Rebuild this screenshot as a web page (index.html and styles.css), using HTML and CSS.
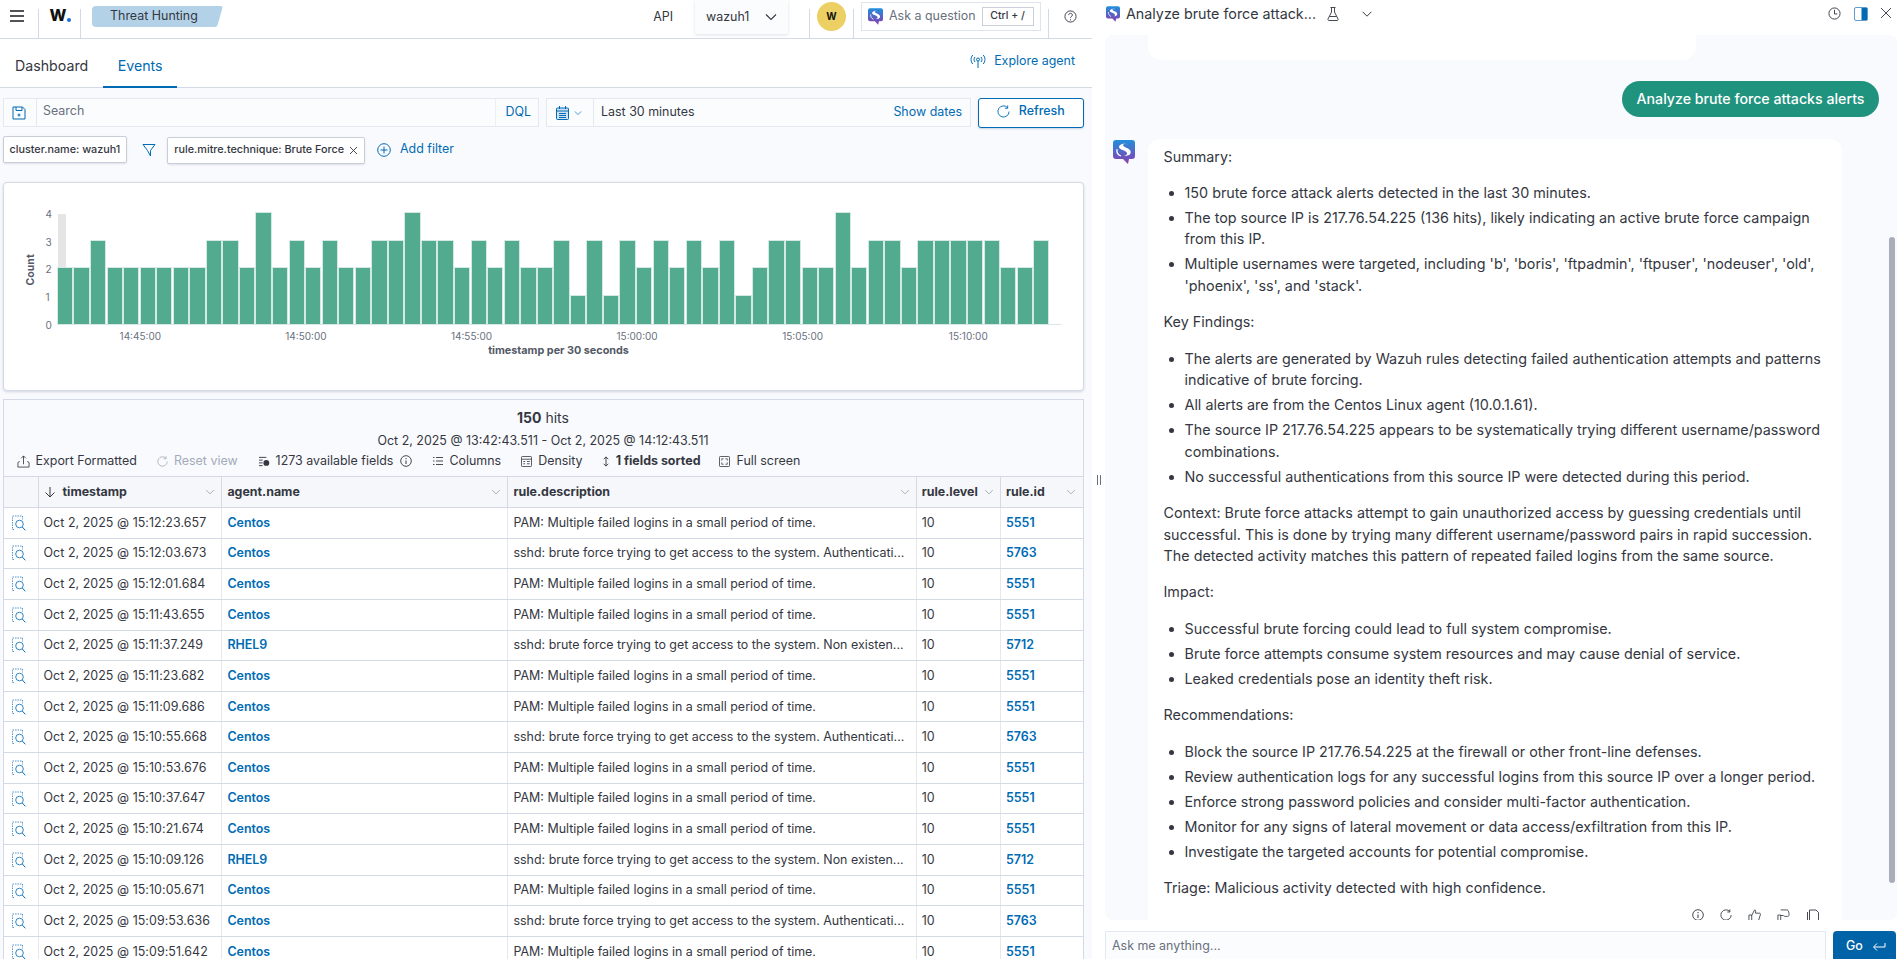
FILE: index.html
```html
<!DOCTYPE html>
<html lang="en">
<head>
<meta charset="utf-8">
<title>Threat Hunting</title>
<link rel="stylesheet" href="styles.css">
</head>
<body>
<svg class="defs" width="0" height="0" aria-hidden="true">
  <defs>
    <linearGradient id="ai" x1="0" y1="0" x2="0" y2="1">
      <stop offset="0" stop-color="#1f8fdc"/><stop offset="1" stop-color="#8a3bb0"/>
    </linearGradient>
    <symbol id="ai-logo" viewBox="0 0 22 24">
      <path d="M3 0h16a3 3 0 0 1 3 3v13a3 3 0 0 1-3 3h-3l-1 5-5-5H3a3 3 0 0 1-3-3V3a3 3 0 0 1 3-3z" fill="url(#ai)"/>
      <path d="M15 4.500C11 2.500 6 4.500 6 7c0 3 7 3 8 6 .4 1.500-1 2.500-3 2.500 5 1 7.500-1.500 6.500-4.500-1-3-8-4-7.500-6 .3-1 3-1.200 5-.5z" fill="#fff"/>
      <path d="M4 9c-.5 3 1 6 4 7" fill="none" stroke="#fff" stroke-width="1.200"/>
    </symbol>
    <symbol id="chev" viewBox="0 0 16 16"><path d="M3 5.500l5 5 5-5" fill="none" stroke="currentColor" stroke-width="1.100"/></symbol>
    <symbol id="inspect" viewBox="0 0 16 16">
      <path d="M3 14.500H1.500v-12h1M1.500 1h10v3.500" fill="none" stroke="#3d8cc6" stroke-dasharray="1.500 1" stroke-width=".9"/>
      <circle cx="8.500" cy="9" r="3.800" fill="none" stroke="#1a78b9" stroke-width=".9"/>
      <path d="M11.300 12l3 3.300" stroke="#006bb4" stroke-width="1"/>
    </symbol>
  </defs>
</svg>

<div class="app">
  <main class="left">
    <header class="topbar">
      <button class="tb-burger" aria-label="Menu">
        <svg width="16" height="14" viewBox="0 0 16 14"><path d="M1 2h14M1 7h14M1 12h14" stroke="#1a1c21" stroke-width="1.500"/></svg>
      </button>
      <div class="tb-logo"><span class="logo-w">W</span><span class="logo-dot"></span></div>
      <div class="crumb"><span class="crumb-body">Threat Hunting</span></div>
      <div class="tb-spacer"></div>
      <span class="tb-api">API</span>
      <div class="tb-select"><span>wazuh1</span><svg class="ic16" width="16" height="16"><use href="#chev"/></svg></div>
      <div class="tb-avatar-wrap"><span class="avatar">w</span></div>
      <div class="ask">
        <svg width="15" height="17"><use href="#ai-logo"/></svg>
        <span class="ask-text">Ask a question</span>
        <span class="kbd">Ctrl + /</span>
      </div>
      <div class="tb-help">
        <svg width="13" height="13" viewBox="0 0 14 14"><circle cx="7" cy="7" r="6" fill="none" stroke="#343741"/><path d="M5 5.500c0-2.500 4-2.500 4 0 0 1.500-2 1.500-2 3M7 10v1.200" fill="none" stroke="#343741"/></svg>
      </div>
    </header>

    <nav class="tabs">
      <a class="tab">Dashboard</a>
      <a class="tab tab-on">Events</a>
      <div class="tb-spacer"></div>
      <a class="explore">
        <svg width="16" height="14" viewBox="0 0 16 14"><g fill="none" stroke="#006bb4"><circle cx="8" cy="5.500" r="1.500"/><path d="M8 7v7M5 3c-1.300 1.500-1.300 3.500 0 5M11 3c1.300 1.500 1.300 3.500 0 5M2.800 1C.5 3.500.5 7.500 2.800 10M13.200 1c2.300 2.500 2.300 6.500 0 9"/></g></svg>
        Explore agent
      </a>
    </nav>

    <div class="content">
      <div class="query">
        <div class="searchbar">
          <span class="save">
            <svg width="14" height="14" viewBox="0 0 14 14"><path d="M1 1h9.500L13 3.500V13H1zM4 1v3.500h6V1M7 7.500v3M5.500 9h3" fill="none" stroke="#006bb4"/></svg>
          </span>
          <span class="search-ph">Search</span>
          <span class="dql">DQL</span>
        </div>
        <div class="datebar">
          <span class="cal">
            <svg width="13" height="14" viewBox="0 0 13 14"><rect x=".5" y="2" width="12" height="11.500" rx="1" fill="#cfe2f1" stroke="#006bb4"/><path d="M3.500 0v3M9.500 0v3M.5 5h12M3 7.500h7M3 9.500h7M3 11.500h7" stroke="#006bb4"/></svg>
            <svg class="cal-chev" width="10" height="10"><use href="#chev"/></svg>
          </span>
          <span class="date-val">Last 30 minutes</span>
          <span class="show-dates">Show dates</span>
        </div>
        <button class="refresh">
          <svg width="13" height="13" viewBox="0 0 14 14"><path d="M11.500 3A6 6 0 1 0 13 7M11.500 .5V3.500H8.500" fill="none" stroke="#006bb4"/></svg>
          Refresh
        </button>
      </div>

      <div class="filters">
        <span class="fpill">cluster.name: wazuh1</span>
        <span class="ficon">
          <svg width="14" height="14" viewBox="0 0 14 14"><path d="M1 1.500h12L8.500 7.500V13L5.500 7.500z" fill="none" stroke="#006bb4"/></svg>
        </span>
        <span class="fpill fpill2">rule.mitre.technique: Brute Force
          <svg width="9" height="9" viewBox="0 0 9 9"><path d="M1 1l7 7M8 1L1 8" stroke="#343741" stroke-width=".9"/></svg>
        </span>
        <span class="addf">
          <svg width="14" height="14" viewBox="0 0 14 14"><circle cx="7" cy="7" r="6.300" fill="none" stroke="#006bb4"/><path d="M3.500 7h7M7 3.500v7" stroke="#006bb4"/></svg>
          Add filter
        </span>
      </div>

      <section class="chart">
        <div class="brush"></div>
        <div class="axis-title-y">Count</div>
        <span class="yt y4">4</span><span class="yt y3">3</span><span class="yt y2">2</span><span class="yt y1">1</span><span class="yt y0">0</span>
        <div class="bars">
          <i class="b2"></i><i class="b2"></i><i class="b3"></i><i class="b2"></i><i class="b2"></i><i class="b2"></i><i class="b2"></i><i class="b2"></i><i class="b2"></i><i class="b3"></i>
          <i class="b3"></i><i class="b2"></i><i class="b4"></i><i class="b2"></i><i class="b3"></i><i class="b2"></i><i class="b3"></i><i class="b2"></i><i class="b2"></i><i class="b3"></i>
          <i class="b3"></i><i class="b4"></i><i class="b3"></i><i class="b3"></i><i class="b2"></i><i class="b3"></i><i class="b2"></i><i class="b3"></i><i class="b2"></i><i class="b2"></i>
          <i class="b3"></i><i class="b1"></i><i class="b3"></i><i class="b1"></i><i class="b3"></i><i class="b2"></i><i class="b3"></i><i class="b2"></i><i class="b3"></i><i class="b2"></i>
          <i class="b3"></i><i class="b1"></i><i class="b2"></i><i class="b3"></i><i class="b3"></i><i class="b2"></i><i class="b2"></i><i class="b4"></i><i class="b2"></i><i class="b3"></i>
          <i class="b3"></i><i class="b2"></i><i class="b3"></i><i class="b3"></i><i class="b3"></i><i class="b3"></i><i class="b3"></i><i class="b2"></i><i class="b2"></i><i class="b3"></i>
        </div>
        <div class="xticks">
          <span>14:45:00</span><span>14:50:00</span><span>14:55:00</span><span>15:00:00</span><span>15:05:00</span><span>15:10:00</span>
        </div>
        <div class="axis-title-x">timestamp per 30 seconds</div>
      </section>

      <section class="results">
        <div class="res-head">
          <div class="hits"><b>150</b> hits</div>
          <div class="range">Oct 2, 2025 @ 13:42:43.511 - Oct 2, 2025 @ 14:12:43.511</div>
          <div class="toolbar">
            <span class="tool t-export"><svg width="13" height="13" viewBox="0 0 14 14"><path d="M1 8v5h12V8M1 8l2-1M13 8l-2-1M7 10V1M4.500 3.500L7 1l2.500 2.500" fill="none" stroke="#343741" stroke-width=".9"/></svg>Export Formatted</span>
            <span class="tool t-reset"><svg width="11" height="11" viewBox="0 0 14 14"><path d="M11.500 3A6 6 0 1 0 13 7M11.500 .5V3.500H8.500" fill="none" stroke="#a2abba"/></svg>Reset view</span>
            <span class="tool t-fields"><svg width="11" height="11" viewBox="0 0 12 12"><path d="M0 1.500h8M0 4.500h4M0 7.500h4M0 10.500h4" stroke="#343741"/><circle cx="8" cy="7.500" r="3.200" fill="#343741"/></svg>1273 available fields<svg class="info" width="12" height="12" viewBox="0 0 12 12"><circle cx="6" cy="6" r="5.300" fill="none" stroke="#343741" stroke-width=".9"/><path d="M6 5.500v3.500M6 3v1.200" stroke="#343741"/></svg></span>
            <span class="tool t-cols"><svg width="10" height="10" viewBox="0 0 10 10"><path d="M0 1.500h1.500M0 5h1.500M0 8.500h1.500M3 1.500h7M3 5h7M3 8.500h7" stroke="#343741" stroke-width=".9"/></svg>Columns</span>
            <span class="tool t-dens"><svg width="11" height="11" viewBox="0 0 12 12"><rect x=".5" y=".5" width="11" height="11" rx="1" fill="none" stroke="#343741" stroke-width=".9"/><path d="M.5 3.500h11M2.500 6h2M6.500 6h3M2.500 8.500h2M6.500 8.500h3" stroke="#343741" stroke-width=".9"/></svg>Density</span>
            <span class="tool t-sort"><svg width="8" height="11" viewBox="0 0 8 12"><path d="M4 1v10M1.500 3.500L4 1l2.500 2.500M1.500 8.500L4 11l2.500-2.500" fill="none" stroke="#343741"/></svg><b>1 fields sorted</b></span>
            <span class="tool t-full"><svg width="11" height="11" viewBox="0 0 12 12"><rect x=".5" y=".5" width="11" height="11" rx="1" fill="none" stroke="#343741" stroke-width=".9"/><path d="M3 5V3h2M7 3h2v2M9 7v2H7M5 9H3V7" fill="none" stroke="#343741" stroke-width=".8"/></svg>Full screen</span>
          </div>
        </div>

        <div class="grid">
          <div class="row row-h">
            <div class="cell"></div>
            <div class="cell"><svg class="sort-arrow" width="12" height="12" viewBox="0 0 12 12"><path d="M6 1v10M1.500 6.500L6 11l4.500-4.500" fill="none" stroke="#343741"/></svg><span class="h-t">timestamp</span><svg class="h-c" width="12" height="12"><use href="#chev"/></svg></div>
            <div class="cell"><span class="h-t">agent.name</span><svg class="h-c" width="12" height="12"><use href="#chev"/></svg></div>
            <div class="cell"><span class="h-t">rule.description</span><svg class="h-c" width="12" height="12"><use href="#chev"/></svg></div>
            <div class="cell"><span class="h-t">rule.level</span><svg class="h-c" width="12" height="12"><use href="#chev"/></svg></div>
            <div class="cell"><span class="h-t">rule.id</span><svg class="h-c" width="12" height="12"><use href="#chev"/></svg></div>
          </div>

          <div class="row"><div class="cell ci"><svg width="16" height="16"><use href="#inspect"/></svg></div><div class="cell ts">Oct 2, 2025 @ 15:12:23.657</div><div class="cell lnk">Centos</div><div class="cell">PAM: Multiple failed logins in a small period of time.</div><div class="cell">10</div><div class="cell lnk">5551</div></div>
          <div class="row"><div class="cell ci"><svg width="16" height="16"><use href="#inspect"/></svg></div><div class="cell ts">Oct 2, 2025 @ 15:12:03.673</div><div class="cell lnk">Centos</div><div class="cell">sshd: brute force trying to get access to the system. Authenticati...</div><div class="cell">10</div><div class="cell lnk">5763</div></div>
          <div class="row"><div class="cell ci"><svg width="16" height="16"><use href="#inspect"/></svg></div><div class="cell ts">Oct 2, 2025 @ 15:12:01.684</div><div class="cell lnk">Centos</div><div class="cell">PAM: Multiple failed logins in a small period of time.</div><div class="cell">10</div><div class="cell lnk">5551</div></div>
          <div class="row"><div class="cell ci"><svg width="16" height="16"><use href="#inspect"/></svg></div><div class="cell ts">Oct 2, 2025 @ 15:11:43.655</div><div class="cell lnk">Centos</div><div class="cell">PAM: Multiple failed logins in a small period of time.</div><div class="cell">10</div><div class="cell lnk">5551</div></div>
          <div class="row"><div class="cell ci"><svg width="16" height="16"><use href="#inspect"/></svg></div><div class="cell ts">Oct 2, 2025 @ 15:11:37.249</div><div class="cell lnk">RHEL9</div><div class="cell">sshd: brute force trying to get access to the system. Non existen...</div><div class="cell">10</div><div class="cell lnk">5712</div></div>
          <div class="row"><div class="cell ci"><svg width="16" height="16"><use href="#inspect"/></svg></div><div class="cell ts">Oct 2, 2025 @ 15:11:23.682</div><div class="cell lnk">Centos</div><div class="cell">PAM: Multiple failed logins in a small period of time.</div><div class="cell">10</div><div class="cell lnk">5551</div></div>
          <div class="row"><div class="cell ci"><svg width="16" height="16"><use href="#inspect"/></svg></div><div class="cell ts">Oct 2, 2025 @ 15:11:09.686</div><div class="cell lnk">Centos</div><div class="cell">PAM: Multiple failed logins in a small period of time.</div><div class="cell">10</div><div class="cell lnk">5551</div></div>
          <div class="row"><div class="cell ci"><svg width="16" height="16"><use href="#inspect"/></svg></div><div class="cell ts">Oct 2, 2025 @ 15:10:55.668</div><div class="cell lnk">Centos</div><div class="cell">sshd: brute force trying to get access to the system. Authenticati...</div><div class="cell">10</div><div class="cell lnk">5763</div></div>
          <div class="row"><div class="cell ci"><svg width="16" height="16"><use href="#inspect"/></svg></div><div class="cell ts">Oct 2, 2025 @ 15:10:53.676</div><div class="cell lnk">Centos</div><div class="cell">PAM: Multiple failed logins in a small period of time.</div><div class="cell">10</div><div class="cell lnk">5551</div></div>
          <div class="row"><div class="cell ci"><svg width="16" height="16"><use href="#inspect"/></svg></div><div class="cell ts">Oct 2, 2025 @ 15:10:37.647</div><div class="cell lnk">Centos</div><div class="cell">PAM: Multiple failed logins in a small period of time.</div><div class="cell">10</div><div class="cell lnk">5551</div></div>
          <div class="row"><div class="cell ci"><svg width="16" height="16"><use href="#inspect"/></svg></div><div class="cell ts">Oct 2, 2025 @ 15:10:21.674</div><div class="cell lnk">Centos</div><div class="cell">PAM: Multiple failed logins in a small period of time.</div><div class="cell">10</div><div class="cell lnk">5551</div></div>
          <div class="row"><div class="cell ci"><svg width="16" height="16"><use href="#inspect"/></svg></div><div class="cell ts">Oct 2, 2025 @ 15:10:09.126</div><div class="cell lnk">RHEL9</div><div class="cell">sshd: brute force trying to get access to the system. Non existen...</div><div class="cell">10</div><div class="cell lnk">5712</div></div>
          <div class="row"><div class="cell ci"><svg width="16" height="16"><use href="#inspect"/></svg></div><div class="cell ts">Oct 2, 2025 @ 15:10:05.671</div><div class="cell lnk">Centos</div><div class="cell">PAM: Multiple failed logins in a small period of time.</div><div class="cell">10</div><div class="cell lnk">5551</div></div>
          <div class="row"><div class="cell ci"><svg width="16" height="16"><use href="#inspect"/></svg></div><div class="cell ts">Oct 2, 2025 @ 15:09:53.636</div><div class="cell lnk">Centos</div><div class="cell">sshd: brute force trying to get access to the system. Authenticati...</div><div class="cell">10</div><div class="cell lnk">5763</div></div>
          <div class="row"><div class="cell ci"><svg width="16" height="16"><use href="#inspect"/></svg></div><div class="cell ts">Oct 2, 2025 @ 15:09:51.642</div><div class="cell lnk">Centos</div><div class="cell">PAM: Multiple failed logins in a small period of time.</div><div class="cell">10</div><div class="cell lnk">5551</div></div>
        </div>
      </section>
    </div>
  </main>

  <div class="handle"><span class="grip"></span></div>

  <aside class="chat">
    <header class="chat-top">
      <svg class="chat-top-logo" width="14" height="16"><use href="#ai-logo"/></svg>
      <span class="chat-title">Analyze brute force attack...</span>
      <svg class="flask" width="12" height="14" viewBox="0 0 12 14"><path d="M3.500 .5h5M4.500 .5V5L1 12c-.3.700 0 1.500 1 1.500h8c1 0 1.300-.8 1-1.500L7.500 5V.5M2.500 9.500h7" fill="none" stroke="#343741" stroke-width=".9"/></svg>
      <svg class="chat-chev" width="14" height="14"><use href="#chev"/></svg>
      <div class="tb-spacer"></div>
      <svg class="cti" width="13" height="13" viewBox="0 0 14 14"><circle cx="7" cy="7" r="6" fill="none" stroke="#343741"/><path d="M7 3v4.500h3" fill="none" stroke="#343741"/></svg>
      <svg class="cti" width="14" height="14" viewBox="0 0 14 14"><rect x=".5" y=".5" width="13" height="13" rx="1.500" fill="#fff" stroke="#5d9ccd"/><rect x="7.500" y="1" width="5.500" height="12" fill="#006bb4"/></svg>
      <svg class="cti" width="12" height="12" viewBox="0 0 12 12"><path d="M1 1l10 10M11 1L1 11" stroke="#343741" stroke-width=".9"/></svg>
    </header>

    <div class="chat-body">
      <div class="prev-card"></div>
      <div class="bubble-row"><div class="bubble">Analyze brute force attacks alerts</div></div>
      <div class="msg">
        <svg class="msg-logo" width="22" height="24"><use href="#ai-logo"/></svg>
        <div class="card">
          <p>Summary:</p>
          <ul>
            <li>150 brute force attack alerts detected in the last 30 minutes.</li>
            <li>The top source IP is 217.76.54.225 (136 hits), likely indicating an active brute force campaign from this IP.</li>
            <li>Multiple usernames were targeted, including 'b', 'boris', 'ftpadmin', 'ftpuser', 'nodeuser', 'old', 'phoenix', 'ss', and 'stack'.</li>
          </ul>
          <p>Key Findings:</p>
          <ul>
            <li>The alerts are generated by Wazuh rules detecting failed authentication attempts and patterns indicative of brute forcing.</li>
            <li>All alerts are from the Centos Linux agent (10.0.1.61).</li>
            <li>The source IP 217.76.54.225 appears to be systematically trying different username/password combinations.</li>
            <li>No successful authentications from this source IP were detected during this period.</li>
          </ul>
          <p>Context: Brute force attacks attempt to gain unauthorized access by guessing credentials until successful. This is done by trying many different username/password pairs in rapid succession. The detected activity matches this pattern of repeated failed logins from the same source.</p>
          <p>Impact:</p>
          <ul>
            <li>Successful brute forcing could lead to full system compromise.</li>
            <li>Brute force attempts consume system resources and may cause denial of service.</li>
            <li>Leaked credentials pose an identity theft risk.</li>
          </ul>
          <p>Recommendations:</p>
          <ul>
            <li>Block the source IP 217.76.54.225 at the firewall or other front-line defenses.</li>
            <li>Review authentication logs for any successful logins from this source IP over a longer period.</li>
            <li>Enforce strong password policies and consider multi-factor authentication.</li>
            <li>Monitor for any signs of lateral movement or data access/exfiltration from this IP.</li>
            <li>Investigate the targeted accounts for potential compromise.</li>
          </ul>
          <p>Triage: Malicious activity detected with high confidence.</p>
          <div class="actions">
            <svg width="12" height="12" viewBox="0 0 12 12"><circle cx="6" cy="6" r="5.300" fill="none" stroke="#343741" stroke-width=".9"/><path d="M6 5.500v3.500M6 3v1.200" stroke="#343741"/></svg>
            <svg width="12" height="12" viewBox="0 0 14 14"><path d="M11.500 3A6 6 0 1 0 13 7M11.500 .5V3.500H8.500" fill="none" stroke="#343741"/></svg>
            <svg width="13" height="13" viewBox="0 0 14 14"><path d="M1 6.500h3V13H1zM4 7l3-6c1.500 0 1.500 1.500 1 3.500h4.500c1 0 1 1 .7 2L11.500 12c-.3 1-1 1-2 1H4" fill="none" stroke="#343741" stroke-width=".9"/></svg>
            <svg width="13" height="13" viewBox="0 0 14 14"><path d="M1 6.500h3V13H1zM4 7h2.500c1 0 1 1 3 1h2c1 0 1.500-1 1.500-2s-.5-5-2-5H4" fill="none" stroke="#343741" stroke-width=".9"/></svg>
            <svg width="12" height="14" viewBox="0 0 12 14"><path d="M2.500 13V1h6.500l2.500 2.500V13M.5 3v11" fill="none" stroke="#343741" stroke-width=".9"/></svg>
          </div>
        </div>
      </div>
      <div class="scroll-thumb"></div>
    </div>

    <div class="composer">
      <div class="input">Ask me anything...</div>
      <button class="go">Go
        <svg width="14" height="10" viewBox="0 0 14 10"><path d="M13 1v4H2M5 1.500L1.500 5 5 8.500" fill="none" stroke="#fff"/></svg>
      </button>
    </div>
  </aside>
</div>
</body>
</html>
```

FILE: styles.css
```css
* { box-sizing: border-box; }
html, body { margin: 0; height: 100%; overflow: hidden; background: #fff; }
body { font: 12.450px/1.3 Inter, "Liberation Sans", sans-serif; color: #343741; }
.defs { position: absolute; }
button { font: inherit; }
svg { flex: none; display: block; }
.tb-spacer { flex: 1; }

.app { display: flex; height: 959px; overflow: hidden; }
.left { width: 1092px; flex: none; display: flex; flex-direction: column; overflow: hidden; }

/* top bar */
.topbar { height: 39px; flex: none; display: flex; align-items: flex-start; border-bottom: 1px solid #d3dae6; }
.tb-burger { width: 37.500px; height: 32px; border: 0; background: none; padding: 0 0 0 9px; display: flex; align-items: center; }
.tb-logo { width: 43.500px; height: 30px; margin-top: 9px; border-left: 1px solid #d3dae6; border-right: 1px solid #d3dae6; padding: 0 0 0 11px; display: flex; align-items: flex-start; }
.logo-w { font: 800 16px/15px Inter, sans-serif; color: #111; letter-spacing: -.5px; margin-top: -1px; }
.logo-dot { width: 4px; height: 4px; border-radius: 50%; background: #1b6fe0; margin: 9px 0 0 1px; }
.crumb { display: flex; margin: 6px 0 0 11px; height: 21px; }
.crumb-body { width: 123px; background: #b3d2e8; border-radius: 4px 0 0 4px; padding-left: 18px; line-height: 20px; color: #343741; }
.crumb::after { content: ""; width: 8px; margin-left: -3px; background: #b3d2e8; border-radius: 0 2px 2px 0; transform: skewX(-16deg); }
.tb-api { margin: 8px 22px 0 0; line-height: 18px; }
.tb-select { width: 93px; height: 34px; display: flex; align-items: center; padding: 0 9px 0 11px; justify-content: space-between; box-shadow: 0 1px 3px rgba(60,80,120,.18); background: #fbfcfe; }
.tb-select .ic16 { color: #343741; }
.tb-avatar-wrap { margin: 9px 0 0 21px; width: 45px; height: 30px; border-left: 1px solid #d3dae6; border-right: 1px solid #d3dae6; display: flex; justify-content: center; }
.avatar { width: 29px; height: 29px; border-radius: 50%; background: #ecd064; font: 700 10px/28px Inter, sans-serif; text-align: center; color: #111; margin-top: -7px; text-transform: uppercase; }
.ask { width: 180px; height: 29px; margin: 2px 0 0 7px; border: 1px solid #dfe3ec; display: flex; align-items: center; padding-left: 6px; }
.ask-text { margin-left: 6px; color: #69707d; }
.kbd { margin-left: 6px; width: 52px; height: 19px; border: 1px solid #c9ced9; line-height: 15px; text-align: center; font-size: 10.500px; font-weight: 500; color: #343741; }
.tb-help { margin: 9px 0 0 7px; height: 30px; width: 44px; flex: none; border-left: 1px solid #d3dae6; padding: 1px 0 0 15px; }

/* tabs */
.tabs { height: 49px; flex: none; display: flex; border-bottom: 1px solid #d3dae6; padding-left: 15px; }
.tab { font-size: 14.200px; line-height: 53px; height: 49px; color: #343741; }
.tab-on { color: #006bb4; margin-left: 15px; padding: 0 14.500px; border-bottom: 2px solid #006bb4; }
.explore { display: flex; align-items: center; gap: 8px; color: #006bb4; height: 26px; margin: 9px 17px 0 0; }

/* content */
.content { flex: 1; background: #f9fafd; padding: 10px 8px 0 2.500px; min-height: 0; }
.query { display: flex; height: 29px; }
.searchbar { width: 536px; display: flex; align-items: center; border: 1px solid #e4e8f0; background: #fbfcfe; }
.save { width: 33.500px; height: 100%; display: flex; align-items: center; justify-content: center; padding-right: 2px; border-right: 1px solid #e4e8f0; }
.search-ph { flex: 1; padding: 0 0 3px 6px; color: #69707d; }
.dql { width: 43px; height: 100%; border-left: 1px solid #eceff5; color: #006bb4; display: flex; align-items: center; padding-left: 10px; }
.datebar { width: 425px; margin-left: 7.500px; display: flex; align-items: center; border: 1px solid #e4e8f0; background: #fbfcfe; }
.cal { width: 47px; height: 100%; display: flex; align-items: center; gap: 4px; padding-left: 9px; border-right: 1px solid #e4e8f0; }
.cal-chev { color: #006bb4; }
.date-val { flex: 1; padding-left: 7px; }
.show-dates { color: #006bb4; padding-right: 8px; }
.refresh { width: 105.500px; margin-left: 7px; height: 30px; background: #fff; border: 1px solid #006bb4; border-radius: 3px; color: #006bb4; font-weight: 500; display: flex; align-items: center; justify-content: center; gap: 9px; box-shadow: 0 1px 2px rgba(0,60,110,.2); padding: 0 0 3px; }

.filters { display: flex; align-items: center; height: 27px; margin-top: 9px; }
.fpill { height: 27px; background: #fff; border: 1px solid #c9ced9; border-radius: 2px; padding: 0 6px; font-size: 10.800px; line-height: 24px; color: #343741; box-shadow: 0 1px 2px rgba(60,80,120,.15); display: flex; align-items: center; gap: 5px; white-space: nowrap; font-weight: 500; }
.ficon { margin: 0 11px 0 15px; }
.fpill2 { margin-top: 1px; }
.addf { display: flex; align-items: center; gap: 9px; margin-left: 12px; color: #006bb4; }

/* chart */
.chart { position: relative; height: 209px; margin-top: 19px; background: #fff; border: 1px solid #d3dae6; border-radius: 4px; box-shadow: 0 1px 3px rgba(60,80,120,.2); width: 1081px; }
.bars { position: absolute; left: 54.400px; top: 31px; height: 110.500px; width: 1003px; display: flex; align-items: flex-end; gap: 2.250px; border-bottom: 1px solid #e0e4ea; }
.bars i { width: 14.300px; flex: none; background: #52aa8f; box-shadow: 0 0 0 1px #d3e9e1; }
.b1 { height: 27.600px; }
.b2 { height: 55.200px; }
.b3 { height: 82.800px; }
.b4 { height: 110.500px; }
.brush { position: absolute; left: 54.400px; top: 31px; width: 8.500px; height: 55px; background: #e5e5e5; }
.yt { position: absolute; left: 42px; font-size: 10px; line-height: 12px; color: #69707d; }
.y4 { top: 25px; }
.y3 { top: 52.600px; }
.y2 { top: 80.200px; }
.y1 { top: 107.800px; }
.y0 { top: 135.500px; }
.axis-title-y { position: absolute; left: 7px; top: 80px; width: 40px; text-align: center; font-weight: 700; font-size: 10.500px; color: #535966; transform: rotate(-90deg); }
.xticks { position: absolute; left: 54px; top: 147px; display: flex; }
.xticks span { width: 165.600px; text-align: center; font-size: 10px; line-height: 13px; color: #69707d; }
.axis-title-x { position: absolute; left: 0; right: 0; padding-left: 31px; top: 161px; text-align: center; font-weight: 700; font-size: 10.800px; line-height: 13px; color: #535966; }

/* results */
.results { width: 1081px; margin-top: 8px; border: 1px solid #d3dae6; border-bottom: 0; }
.res-head { height: 76px; text-align: center; padding-top: 8px; }
.hits { font-size: 14px; line-height: 20px; }
.hits b { font-weight: 700; }
.range { margin-top: 4px; line-height: 18px; }
.toolbar { margin-top: 2px; display: flex; align-items: center; height: 18px; padding-left: 13px; white-space: nowrap; }
.tool { display: flex; align-items: center; gap: 6px; }
.t-reset { color: #a2abba; margin-left: 20px; }
.t-fields { margin-left: 21px; }
.t-fields .info { margin-left: 1px; }
.t-cols { margin-left: 21px; }
.t-dens { margin-left: 20px; }
.t-sort { margin-left: 19px; }
.t-sort b { font-weight: 700; }
.t-full { margin-left: 19px; }

.row { display: grid; grid-template-columns: 35px 183.900px 286.100px 408.200px 84.300px 81.500px; height: 30.650px; background: #fff; border-top: 1px solid #d3dae6; }
.cell { display: flex; align-items: center; padding: 0 5px; border-right: 1px solid #e4e8f0; white-space: nowrap; overflow: hidden; }
.cell:last-child { border-right: 0; }
.ts { letter-spacing: .05px; }
.row-h { background: #f5f7fa; height: 31px; }
.row-h .cell { border-right: 1px solid #d3dae6; padding: 0 6px 0 5px; }
.row-h .cell:last-child { border-right: 0; }
.h-t { font-weight: 700; font-size: 12.400px; flex: 1; color: #343741; }
.h-c { color: #98a2b3; margin-right: -1px; }
.sort-arrow { margin-right: 7px; margin-left: 0; }
.lnk { color: #006bb4; font-weight: 600; }
.ci { justify-content: center; padding: 0 3px 0 0; }

/* chat */
.handle { width: 13px; flex: none; display: flex; align-items: center; justify-content: center; }
.grip { width: 4px; height: 10px; border-left: 1px solid #69707d; border-right: 1px solid #69707d; }
.chat { flex: 1; display: flex; flex-direction: column; min-width: 0; padding-right: 5px; }
.chat-top { height: 35px; flex: none; display: flex; align-items: flex-start; padding: 6px 0 0 1px; margin-right: -5px; }
.chat-top-logo { margin: 0 6px 0 0; }
.chat-title { line-height: 15px; color: #343741; font-size: 14.300px; }
.flask { margin: 1px 0 0 11px; }
.chat-chev { margin: 1px 0 0 21px; color: #343741; }
.cti { margin: 1px 0 0 12.500px; }
.cti:last-child { margin-right: 10px; }
.chat-body { position: relative; height: 885px; flex: none; background: #f9fafd; border-radius: 8px; overflow: hidden; font-size: 14.350px; }
.prev-card { width: 547.500px; height: 25px; margin-left: 43px; background: #fff; border-radius: 0 0 14px 14px; }
.bubble-row { display: flex; justify-content: flex-end; margin: 21px 18px 0 0; }
.bubble { height: 36px; padding: 0 14.500px; background: #20937e; color: #fff; border-radius: 18px; line-height: 36px; font-weight: 500; font-size: 14.200px; }
.msg { display: flex; margin-top: 22px; padding-left: 7.500px; }
.msg-logo { margin: 1px 13.500px 0 0; }
.card { width: 693.500px; height: 790px; background: #fff; border-radius: 12px; padding: 6.500px 15px 0 15.500px; line-height: 21.500px; color: #343741; }
.card p { margin: 0 0 14.900px; }
.card ul { margin: 0 0 14.900px; padding-left: 21px; }
.card li { margin-bottom: 3.500px; }
.actions { display: flex; gap: 16.300px; padding-left: 528px; margin-top: -4px; height: 12px; overflow: hidden; }
.scroll-thumb { position: absolute; left: 783.500px; top: 202px; width: 6px; height: 646px; background: #a9adb8; border-radius: 3px; }
.composer { height: 28px; flex: none; margin-top: 11px; display: flex; gap: 7px; }
.input { width: 721px; height: 34px; background: #fbfcfe; border: 1px solid #e4e8f0; padding: 0 6px; line-height: 28px; color: #69707d; }
.go { width: 63px; height: 34px; background: #0063a8; color: #fff; border: 0; border-radius: 4px 4px 0 0; font-weight: 500; display: flex; align-items: flex-start; gap: 9px; padding: 7px 0 0 13px; }
.go svg { margin-top: 4px; }
```
